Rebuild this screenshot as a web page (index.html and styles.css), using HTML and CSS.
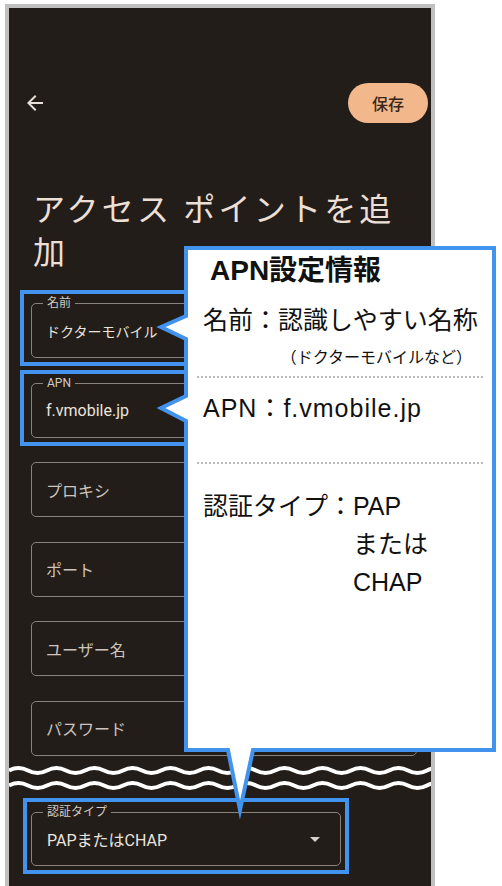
FILE: index.html
```html
<!DOCTYPE html>
<html lang="ja">
<head>
<meta charset="utf-8">
<title>アクセス ポイントを追加</title>
<link rel="stylesheet" href="styles.css">
</head>
<body>
<div class="page">
  <div class="phone">
    <div class="screen">
      <div class="topbar">
        <svg class="back" viewBox="0 0 24 24"><path d="M20 11H7.83l5.59-5.59L12 4l-8 8 8 8 1.41-1.41L7.83 13H20v-2z"/></svg>
        <button class="save">保存</button>
      </div>
      <h1 class="title">アクセス ポイントを追加</h1>
      <div class="fields">
        <div class="slot hl"><div class="field"><span class="label">名前</span><span class="value">ドクターモバイル</span></div></div>
        <div class="slot hl"><div class="field"><span class="label">APN</span><span class="value big">f.vmobile.jp</span></div></div>
        <div class="slot"><div class="field"><span class="ph">プロキシ</span></div></div>
        <div class="slot"><div class="field"><span class="ph">ポート</span></div></div>
        <div class="slot"><div class="field"><span class="ph">ユーザー名</span></div></div>
        <div class="slot"><div class="field"><span class="ph">パスワード</span></div></div>
      </div>
      <svg class="break" viewBox="0 0 422 32" preserveAspectRatio="none">
        <path d="M0,6.5 q9.5,-5 19,0 t19,0 t19,0 t19,0 t19,0 t19,0 t19,0 t19,0 t19,0 t19,0 t19,0 t19,0 t19,0 t19,0 t19,0 t19,0 t19,0 t19,0 t19,0 t19,0 t19,0 t19,0 t19,0"/>
        <path d="M0,21.5 q9.5,-5 19,0 t19,0 t19,0 t19,0 t19,0 t19,0 t19,0 t19,0 t19,0 t19,0 t19,0 t19,0 t19,0 t19,0 t19,0 t19,0 t19,0 t19,0 t19,0 t19,0 t19,0 t19,0 t19,0"/>
      </svg>
      <div class="bottom">
        <div class="slot2"><div class="field"><span class="label">認証タイプ</span><span class="value big">PAPまたはCHAP</span><span class="caret"></span></div></div>
      </div>
    </div>
  </div>

  <svg class="bubble" viewBox="150 240 352 590">
    <path d="M186,248 H494 V750 H253 L240,810 L228,750 H186 V421 L161,408 L186,396 V339 L161,327 L186,316 Z"/>
  </svg>
  <div class="callout">
    <div class="c-title">APN設定情報</div>
    <div class="c-line c-name">名前：認識しやすい名称</div>
    <div class="c-sub">（ドクターモバイルなど）</div>
    <div class="c-rule"></div>
    <div class="c-line c-apn">APN：f.vmobile.jp</div>
    <div class="c-rule c-rule2"></div>
    <div class="c-line c-auth">
      <span class="c-key">認証タイプ：</span>
      <span class="c-vals"><span>PAP</span><span>または</span><span>CHAP</span></span>
    </div>
  </div>
</div>
</body>
</html>
```

FILE: styles.css
```css
* { box-sizing: border-box; }

html, body {
  margin: 0;
  height: 886px;
  overflow: hidden;
  background: #ffffff;
}

.page {
  position: relative;
  width: 502px;
  height: 886px;
  padding: 4px 0 0 5px;
  font-family: Roboto, "Noto Sans CJK JP", sans-serif;
  text-spacing-trim: space-all;
}

.phone {
  width: 430px;
  height: 882px;
  border: 4px solid #c0c0c0;
  border-bottom: 0;
}

.screen {
  height: 100%;
  background: #221d19;
  display: flex;
  flex-direction: column;
}

.topbar {
  display: flex;
  justify-content: space-between;
  align-items: center;
  padding: 75px 3px 0 14px;
  flex: none;
}

.back {
  width: 24px;
  height: 24px;
  fill: #e8dfd8;
}

.save {
  width: 80px;
  height: 40px;
  padding: 0;
  border: 0;
  border-radius: 20px;
  background: #f2b78b;
  color: #3a2618;
  font: 500 16px Roboto, "Noto Sans CJK JP", sans-serif;
}

.title {
  width: 392px;
  margin: 65.5px 0 0;
  padding: 0 0 0 24px;
  font-size: 32px;
  line-height: 43px;
  font-weight: 400;
  letter-spacing: 3.2px;
  color: #ecdfd6;
  flex: none;
}

.fields {
  display: flex;
  flex-direction: column;
  gap: 3.5px;
  margin-top: 15.5px;
  padding: 0 3px 0 11px;
  flex: none;
}

.slot {
  border: 4px solid transparent;
  padding: 9px 7px 4px;
}

.slot.hl {
  border-color: #4193ee;
}

.field {
  position: relative;
  height: 55px;
  border: 1.5px solid #8b827c;
  border-radius: 5px;
  display: flex;
  align-items: center;
  padding-left: 14px;
}

.label {
  position: absolute;
  left: 11px;
  top: -9px;
  padding: 0 4px;
  background: #221d19;
  font-size: 12px;
  line-height: 16px;
  color: #d3cac3;
}

.value {
  font-size: 14px;
  color: #ebe3dd;
}

.value.big {
  font-size: 16px;
}

.ph {
  font-size: 16px;
  color: #cdc4bd;
}

.break {
  display: block;
  width: 100%;
  height: 32px;
  flex: none;
  fill: none;
  stroke: #ffffff;
  stroke-width: 4;
}

.bottom {
  margin-top: 2.5px;
  padding-left: 14px;
  flex: none;
}

.slot2 {
  width: 326px;
  border: 4px solid #4193ee;
  padding: 10px 4px 4px;
}

.slot2 .field {
  height: 54px;
  padding-left: 15px;
}

.caret {
  margin-left: auto;
  margin-right: 20px;
  width: 0;
  height: 0;
  border-left: 5px solid transparent;
  border-right: 5px solid transparent;
  border-top: 5px solid #d8d0ca;
}

.bubble {
  position: absolute;
  left: 150px;
  top: 240px;
  width: 352px;
  height: 590px;
  fill: #ffffff;
  stroke: #4193ee;
  stroke-width: 4;
  stroke-miterlimit: 12;
}

.callout {
  position: absolute;
  left: 188px;
  top: 250px;
  width: 304px;
  height: 498px;
  color: #111111;
  font-family: "Liberation Sans", "Noto Sans CJK JP", sans-serif;
}

.c-title {
  margin: 4px 0 0 22px;
  font-size: 28px;
  line-height: 34px;
  font-weight: 700;
}

.c-line {
  margin-left: 15px;
  font-size: 25px;
  line-height: 34px;
}

.c-name {
  margin-top: 15px;
}

.c-sub {
  margin-top: 10px;
  padding-right: 20px;
  text-align: right;
  font-size: 16px;
  line-height: 22px;
}

.c-rule {
  margin: 7px 9px 0;
  border-top: 2px dotted #b9b9b9;
}

.c-apn {
  margin-top: 13px;
  letter-spacing: 1px;
}

.c-rule2 {
  margin-top: 37px;
}

.c-auth {
  display: flex;
  margin-top: 23px;
  line-height: 38px;
}

.c-vals {
  display: flex;
  flex-direction: column;
}
```
